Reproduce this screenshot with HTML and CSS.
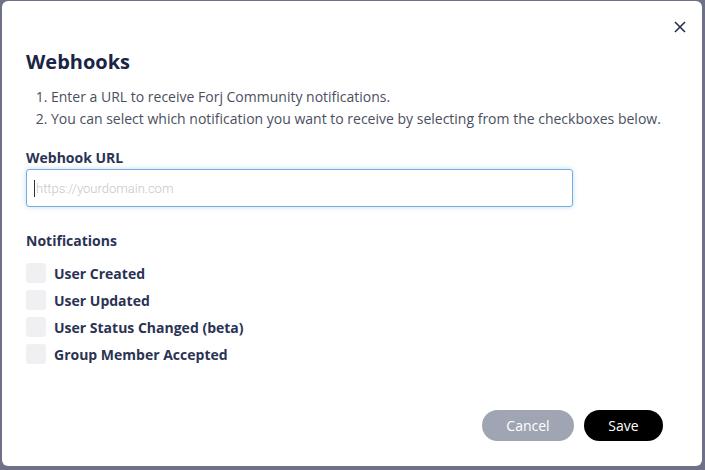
FILE: index.html
```html
<!DOCTYPE html>
<html>
<head>
<meta charset="utf-8">
<link rel="stylesheet" href="styles.css">
</head>
<body>
<div class="overlay">
  <div class="modal">
    <button class="close" aria-label="Close">
      <svg width="12" height="12" viewBox="0 0 12 12"><path d="M1 1L11 11M11 1L1 11" stroke="#1f2a4a" stroke-width="1.5" fill="none"/></svg>
    </button>
    <h1 class="title">Webhooks</h1>
    <ol class="steps">
      <li>Enter a URL to receive Forj Community notifications.</li>
      <li>You can select which notification you want to receive by selecting from the checkboxes below.</li>
    </ol>
    <label class="label">Webhook URL</label>
    <div class="input"><span class="caret"></span><span class="placeholder">https://yourdomain.com</span></div>
    <div class="label notif">Notifications</div>
    <div class="checks">
      <div class="check"><span class="box"></span><span>User Created</span></div>
      <div class="check"><span class="box"></span><span>User Updated</span></div>
      <div class="check"><span class="box"></span><span>User Status Changed (beta)</span></div>
      <div class="check"><span class="box"></span><span>Group Member Accepted</span></div>
    </div>
    <div class="actions">
      <button class="btn cancel">Cancel</button>
      <button class="btn save">Save</button>
    </div>
  </div>
</div>
</body>
</html>
```
FILE: styles.css
```css
html, body { margin: 0; padding: 0; }
body { width: 705px; height: 470px; background: #6e7187; font-family: "Open Sans", sans-serif; overflow: hidden; }
.overlay { padding: 1px 3px 4px 2px; height: 470px; box-sizing: border-box; }
.modal { position: relative; background: #fff; border-radius: 6px; height: 465px; box-sizing: border-box; padding: 48px 24px 0 24px; }
.close { position: absolute; top: 19px; right: 15px; border: 0; background: none; padding: 0; width: 14px; height: 14px; display: flex; align-items: center; justify-content: center; }
.title { margin: 0; font-size: 20px; font-weight: 700; color: #1b2444; line-height: 26px; }
.steps { margin: 11px 0 0 0; padding-left: 25px; font-size: 14px; color: #4a4f5e; line-height: 22px; }
.label { display: block; margin-top: 18px; font-size: 14px; font-weight: 700; color: #2b3354; line-height: 20px; }
.input { margin-top: 1px; width: 547px; height: 38px; box-sizing: border-box; border: 1px solid #74aee3; border-radius: 3px; box-shadow: 0 0 5px rgba(116,174,227,0.45); display: flex; align-items: center; padding-left: 7px; }
.caret { width: 1px; height: 17px; background: #333; margin-right: 1px; }
.placeholder { color: #c5c7cc; font-size: 13px; font-family: "Roboto", sans-serif; font-weight: 300; }
.notif { margin-top: 24px; }
.checks { margin-top: 12px; display: flex; flex-direction: column; gap: 7px; }
.check { display: flex; align-items: center; gap: 8px; font-size: 14px; font-weight: 700; color: #2b3354; height: 20px; }
.box { width: 20px; height: 20px; background: #f0f0f3; border-radius: 3px; }
.actions { position: absolute; right: 39px; bottom: 25px; display: flex; gap: 10px; }
.btn { border: 0; height: 31px; border-radius: 16px; color: #fff; font-family: "Open Sans", sans-serif; font-size: 14px; }
.cancel { width: 92px; background: #a0a5b4; }
.save { width: 79px; background: #000; }
```
